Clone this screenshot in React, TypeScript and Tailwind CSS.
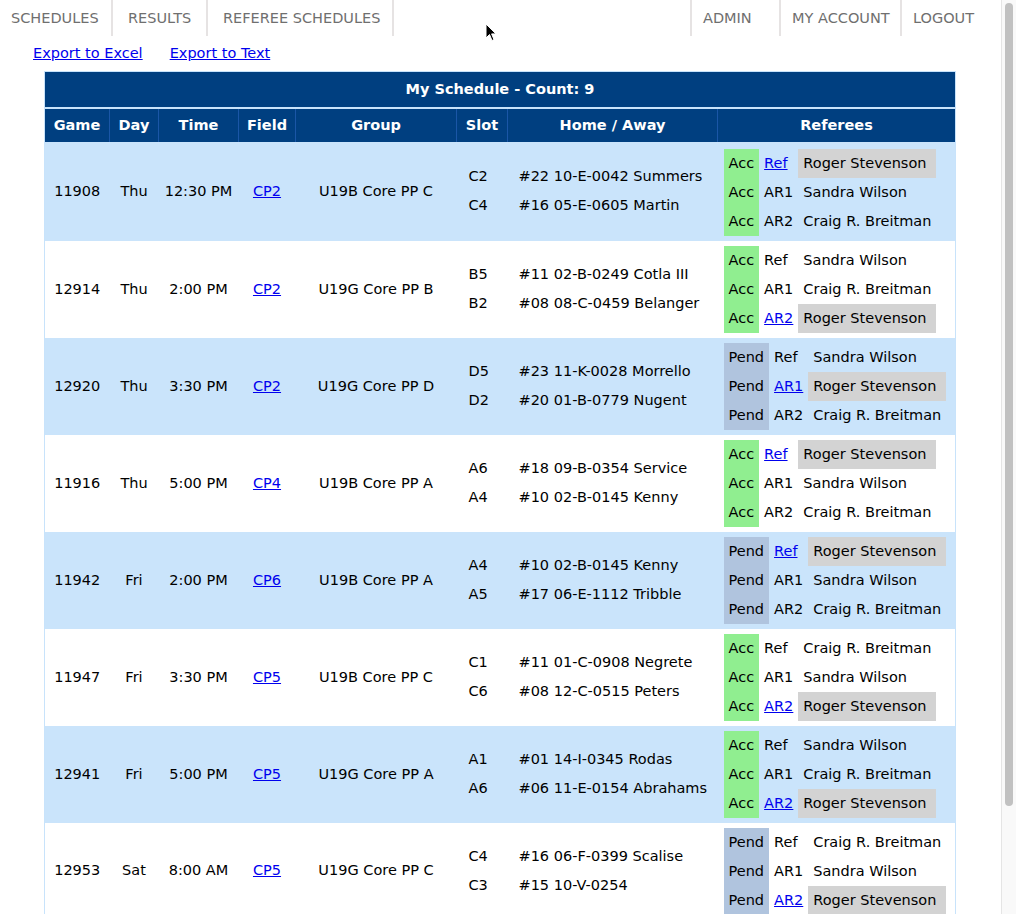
import React from "react";

type Ref = { role: string; name: string; mine?: boolean };
type Game = {
    id: string;
    day: string;
    time: string;
    field: string;
    group: string;
    slots: [string, string];
    teams: [string, string];
    status: "Acc" | "Pend";
    refs: Ref[];
};

const ROGER = "Roger Stevenson";
const SANDRA = "Sandra Wilson";
const CRAIG = "Craig R. Breitman";

const games: Game[] = [
    {
        id: "11908", day: "Thu", time: "12:30 PM", field: "CP2", group: "U19B Core PP C",
        slots: ["C2", "C4"], teams: ["#22 10-E-0042 Summers", "#16 05-E-0605 Martin"], status: "Acc",
        refs: [{ role: "Ref", name: ROGER, mine: true }, { role: "AR1", name: SANDRA }, { role: "AR2", name: CRAIG }],
    },
    {
        id: "12914", day: "Thu", time: "2:00 PM", field: "CP2", group: "U19G Core PP B",
        slots: ["B5", "B2"], teams: ["#11 02-B-0249 Cotla III", "#08 08-C-0459 Belanger"], status: "Acc",
        refs: [{ role: "Ref", name: SANDRA }, { role: "AR1", name: CRAIG }, { role: "AR2", name: ROGER, mine: true }],
    },
    {
        id: "12920", day: "Thu", time: "3:30 PM", field: "CP2", group: "U19G Core PP D",
        slots: ["D5", "D2"], teams: ["#23 11-K-0028 Morrello", "#20 01-B-0779 Nugent"], status: "Pend",
        refs: [{ role: "Ref", name: SANDRA }, { role: "AR1", name: ROGER, mine: true }, { role: "AR2", name: CRAIG }],
    },
    {
        id: "11916", day: "Thu", time: "5:00 PM", field: "CP4", group: "U19B Core PP A",
        slots: ["A6", "A4"], teams: ["#18 09-B-0354 Service", "#10 02-B-0145 Kenny"], status: "Acc",
        refs: [{ role: "Ref", name: ROGER, mine: true }, { role: "AR1", name: SANDRA }, { role: "AR2", name: CRAIG }],
    },
    {
        id: "11942", day: "Fri", time: "2:00 PM", field: "CP6", group: "U19B Core PP A",
        slots: ["A4", "A5"], teams: ["#10 02-B-0145 Kenny", "#17 06-E-1112 Tribble"], status: "Pend",
        refs: [{ role: "Ref", name: ROGER, mine: true }, { role: "AR1", name: SANDRA }, { role: "AR2", name: CRAIG }],
    },
    {
        id: "11947", day: "Fri", time: "3:30 PM", field: "CP5", group: "U19B Core PP C",
        slots: ["C1", "C6"], teams: ["#11 01-C-0908 Negrete", "#08 12-C-0515 Peters"], status: "Acc",
        refs: [{ role: "Ref", name: CRAIG }, { role: "AR1", name: SANDRA }, { role: "AR2", name: ROGER, mine: true }],
    },
    {
        id: "12941", day: "Fri", time: "5:00 PM", field: "CP5", group: "U19G Core PP A",
        slots: ["A1", "A6"], teams: ["#01 14-I-0345 Rodas", "#06 11-E-0154 Abrahams"], status: "Acc",
        refs: [{ role: "Ref", name: SANDRA }, { role: "AR1", name: CRAIG }, { role: "AR2", name: ROGER, mine: true }],
    },
    {
        id: "12953", day: "Sat", time: "8:00 AM", field: "CP5", group: "U19G Core PP C",
        slots: ["C4", "C3"], teams: ["#16 06-F-0399 Scalise", "#15 10-V-0254"], status: "Pend",
        refs: [{ role: "Ref", name: CRAIG }, { role: "AR1", name: SANDRA }, { role: "AR2", name: ROGER, mine: true }],
    },
];

const leftNav = [
    { label: "SCHEDULES", cls: "w-[113px] pl-[11px]" },
    { label: "RESULTS", cls: "w-[95px] pl-[15px]" },
    { label: "REFEREE SCHEDULES", cls: "w-[186px] pl-[15px]" },
];

function RefereeTable({ game }: { game: Game }) {
    const statusBg = game.status === "Acc" ? "bg-[#90ee90]" : "bg-[#b0c4de]";
    return (
        <table className="border-collapse">
            <tbody>
                {game.refs.map((r) => (
                    <tr key={r.role} className="h-[29px]">
                        <td className={`${statusBg} px-[5px]`}>{game.status}</td>
                        <td className="px-[5px]">
                            {r.mine ? <a href="#" className="text-[#0000ee] underline">{r.role}</a> : r.role}
                        </td>
                        <td className={`px-[5px] whitespace-nowrap ${r.mine ? "bg-[#d3d3d3]" : ""}`}>{r.name}</td>
                    </tr>
                ))}
            </tbody>
        </table>
    );
}

export default function App() {
    return (
        <div className="relative flex h-[914px] overflow-hidden bg-white text-[14.5px] leading-[17px] text-black [font-family:'DejaVu_Sans',Verdana,sans-serif]">
            <div className="flex-1">
                {/* Top nav */}
                <nav className="flex h-[36px] text-[#6f6f6f]">
                    {leftNav.map((item) => (
                        <div key={item.label} className={`flex shrink-0 items-center border-r-2 border-[#e6e3e3] ${item.cls}`}>
                            {item.label}
                        </div>
                    ))}
                    <div className="flex-1" />
                    <div className="flex w-[89px] items-center border-l-2 border-[#e6e3e3] pl-[11px]">ADMIN</div>
                    <div className="flex w-[121px] items-center border-l-2 border-[#e6e3e3] pl-[11px]">MY ACCOUNT</div>
                    <div className="flex w-[101px] items-center border-l-2 border-[#e6e3e3] pl-[11px]">LOGOUT</div>
                </nav>

                {/* Export links */}
                <div className="flex gap-[27px] pl-[33px] pt-[9px] pb-[9px]">
                    <a href="#" className="text-[#0000ee] underline">Export to Excel</a>
                    <a href="#" className="text-[#0000ee] underline">Export to Text</a>
                </div>

                {/* Schedule table */}
                <table className="ml-[44px] w-[912px] table-fixed border-collapse border border-[#c8e3fb]">
                    <colgroup>
                        <col className="w-[65px]" />
                        <col className="w-[49px]" />
                        <col className="w-[80px]" />
                        <col className="w-[57px]" />
                        <col className="w-[161px]" />
                        <col className="w-[51px]" />
                        <col className="w-[210px]" />
                        <col />
                    </colgroup>
                    <thead>
                        <tr className="h-[36px] border-b-2 border-[#c8e3fb] bg-[#003f80]">
                            <th colSpan={8} className="text-center font-bold text-white">
                                My Schedule - Count: 9
                            </th>
                        </tr>
                        <tr className="h-[34px] bg-[#003f80] text-white">
                            {["Game", "Day", "Time", "Field", "Group", "Slot", "Home / Away", "Referees"].map((h, i) => (
                                <th
                                    key={h}
                                    className={`text-center font-bold ${i < 7 ? "border-r border-[#1a56a6]" : ""}`}
                                >
                                    {h}
                                </th>
                            ))}
                        </tr>
                    </thead>
                    <tbody>
                        {games.map((g, idx) => (
                            <tr key={g.id} className={`${idx === 0 ? "h-[99px]" : "h-[97px]"} ${idx % 2 === 0 ? "bg-[#cae4fb]" : "bg-white"}`}>
                                <td className="text-center">{g.id}</td>
                                <td className="text-center">{g.day}</td>
                                <td className="text-center whitespace-nowrap">{g.time}</td>
                                <td className="text-center">
                                    <a href="#" className="text-[#0000ee] underline">{g.field}</a>
                                </td>
                                <td className="text-center whitespace-nowrap">{g.group}</td>
                                <td className="pl-[12px]">
                                    <div className="flex flex-col gap-[12px]">
                                        <span>{g.slots[0]}</span>
                                        <span>{g.slots[1]}</span>
                                    </div>
                                </td>
                                <td className="pl-[11px] whitespace-nowrap">
                                    <div className="flex flex-col gap-[12px]">
                                        <span>{g.teams[0]}</span>
                                        <span>{g.teams[1]}</span>
                                    </div>
                                </td>
                                <td className={`pl-[6px] align-top ${idx === 0 ? "pt-[7px]" : "pt-[5px]"}`}>
                                    <RefereeTable game={g} />
                                </td>
                            </tr>
                        ))}
                    </tbody>
                </table>
            </div>

            {/* Scrollbar */}
            <div className="w-[15px] shrink-0 border-l border-[#e5e5e5] bg-[#f9f9f9] px-[3px] pt-[3px]">
                <div className="h-[803px] rounded-full bg-[#c1c1c1]" />
            </div>

            {/* Mouse cursor */}
            <svg className="absolute left-[485px] top-[23px]" width="12" height="19" viewBox="0 0 12 19">
                <path d="M1 1 L1 15 L4.5 11.5 L7 17.5 L9 16.6 L6.6 10.9 L11 10.9 Z" fill="#000" stroke="#fff" strokeWidth="1" />
            </svg>
        </div>
    );
}
